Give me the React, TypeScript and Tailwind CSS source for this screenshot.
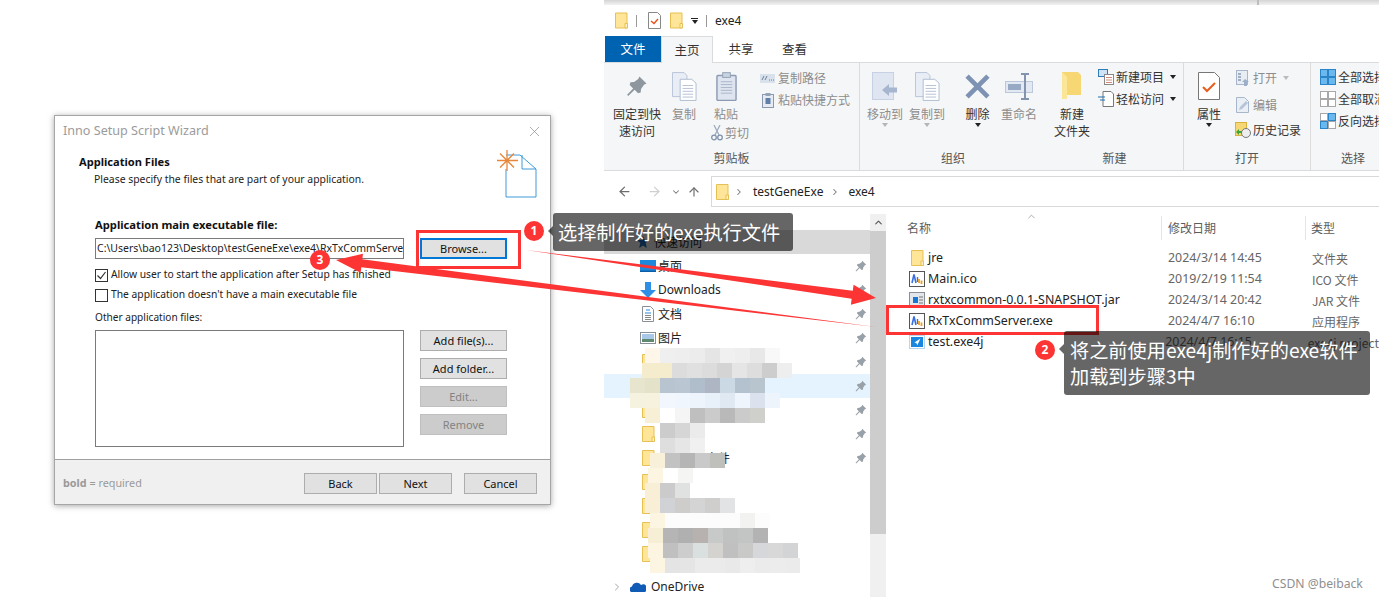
import type { ReactNode } from "react"
import { ArrowLeft, ArrowRight, ArrowUp, ChevronDown, ChevronRight, ChevronUp, X } from "lucide-react"

const UI = "font-['Noto_Sans','Noto_Sans_CJK_SC',sans-serif]"
const CJK = "font-['Noto_Sans_CJK_SC','Noto_Sans',sans-serif]"

const NAV_ROWS = [
  { label: "桌面", icon: "desktop", pin: true },
  { label: "Downloads", icon: "down", pin: true },
  { label: "文档", icon: "doc", pin: true },
  { label: "图片", icon: "pic", pin: true },
  { label: "", icon: "folder", pin: true },
  { label: "", icon: "folder", pin: true, active: true },
  { label: "2024", icon: "folder", pin: true },
  { label: "", icon: "folder", pin: true },
  { label: "　　　　文件", icon: "folder", pin: true },
  { label: "", icon: "folder" },
  { label: "", icon: "folder" },
  { label: "", icon: "folder" },
  { label: "", icon: "folder" },
]

const FILES = [
  { name: "jre", date: "2024/3/14 14:45", type: "文件夹", icon: "folder" },
  { name: "Main.ico", date: "2019/2/19 11:54", type: "ICO 文件", icon: "app" },
  { name: "rxtxcommon-0.0.1-SNAPSHOT.jar", date: "2024/3/14 20:42", type: "JAR 文件", icon: "jar" },
  { name: "RxTxCommServer.exe", date: "2024/4/7 16:10", type: "应用程序", icon: "app" },
  { name: "test.exe4j", date: "2024/4/7 16:15", type: "exe4j project", icon: "exe4j" },
]

// mosaic that hides the folder names: [top, left, colours]
const MOSAIC: [number, number, string[]][] = [
  [348, 645, ["#fdf6e9", "#efefef", "#eeeeee", "#ececec", "#e5e5e5", "#f0f0f0", "#eeeeee", "#e8e8e8", "#f8f8f8"]],
  [363, 642, ["#f5eccd", "#f5eccd", "#dcdcdc", "#e0e0e0", "#dcdcdc", "#d4d4d4", "#e5e5e5", "#dddddd", "#cdcdcd", "#eeeeef"]],
  [378, 630, ["#e8e5cf", "#e4e2c8", "#b8c4d0", "#bac6d2", "#b0bdca", "#aeb6c4", "#cbd9e5", "#b4c2d0", "#b8c4ce"]],
  [393, 630, ["#f5f3e0", "#f6f2dd", "#f2f7fd", "#f0f6fd", "#eef4fc", "#e8f0fa", "#e0e8f2", "#eef5fd", "#dce2ed", "#eef4fc"]],
  [408, 645, ["#f8f0d6", "#ffffff", "#f5f5f5", "#bfbfbf", "#cbcbcb", "#b9b9b9", "#cbcbcb", "#cfcfcc"]],
  [423, 660, ["#cccccc", "#d6d6d6", "#ebebec"]],
  [438, 660, ["#dedede", "#e6e6e7", "#f0f0f0"]],
  [453, 650, ["#f8f0d8", "#c2c2c2", "#b4b5b4", "#c9c9c9", "#bfc0bc"]],
  [468, 648, ["#fbf5e2", "#ffffff", "#f5f5f3"]],
  [483, 645, ["#f8efd6", "#cbcbcb", "#e0e2e2"]],
  [498, 645, ["#f8efd6", "#d1d2d6", "#cfcdcc", "#d4d4d4", "#cfcecc", "#e2e3e5"]],
  [513, 650, ["#fbf5e2", "#fcfcfc", "#fcfcfc", "#fcfcfc", "#fcfcfc", "#fcfcfc", "#f2f2f0", "#fcfcfc"]],
  [528, 648, ["#f7efd5", "#b5b5b5", "#b0b0b0", "#b7b2b0", "#c8c9c9", "#c0c2c2", "#c3c5c5", "#b3b3b3"]],
  [543, 648, ["#fbf5e2", "#c0c0c0", "#cdcdcd", "#dadfe0", "#d5d3d0", "#c0c0c0", "#c9c9c7", "#d5d7da", "#d8d8d8", "#d3d4d6"]],
  [558, 650, ["#fbf5e2", "#e4e4e4", "#e5e5e5", "#ebebeb", "#ebebeb", "#e9e9e9", "#eeeeee", "#ebebeb", "#ececec", "#ebebeb"]],
]

function FolderIcon({ className = "w-[13px] h-[16px]" }: { className?: string }) {
  return (
    <svg viewBox="0 0 13 16" className={className}>
      <path d="M.5.5h11.5v15H.5z" fill="#ffe597" stroke="#e6bf55" />
      <path d="M10 11h2.5v4.5H10z" fill="#fff2c4" stroke="#e6bf55" />
    </svg>
  )
}

function AppIcon() {
  return (
    <svg viewBox="0 0 16 16" className="w-[16px] h-[16px]">
      <rect x=".5" y=".5" width="15" height="15" fill="#fff" stroke="#555" />
      <path d="M3 12 5 3.500 7 12" fill="none" stroke="#3a6fe0" strokeWidth="1.600" />
      <path d="M8.500 6v5" stroke="#3a6fe0" strokeWidth="1.400" />
      <path d="M10 8v4M12.500 9.500V13" stroke="#f0a020" strokeWidth="1.800" />
    </svg>
  )
}

function JarIcon() {
  return (
    <svg viewBox="0 0 16 16" className="w-[16px] h-[16px]">
      <rect x=".5" y=".5" width="15" height="15" fill="#e3e6ea" stroke="#8a8f96" />
      <rect x="4" y="5" width="5" height="6" fill="#1976d2" />
      <path d="M10 5h4M10 8h4M10 11h4" stroke="#777" />
    </svg>
  )
}

function Exe4jIcon() {
  return (
    <svg viewBox="0 0 16 16" className="w-[16px] h-[16px]">
      <rect x=".5" y="1.500" width="15" height="13" fill="#fff" stroke="#b8d4ef" />
      <rect x="2" y="3" width="12" height="10" fill="#1a86e0" />
      <path d="m11.500 4.500-6 4 2 .8.8 2z" fill="#fff" />
    </svg>
  )
}

function PinIcon({ className = "w-[12px] h-[12px]", color = "#98a0a8" }: { className?: string; color?: string }) {
  return (
    <svg viewBox="0 0 12 12" className={className}>
      <path d="M7.300.8 11.200 4.700 9.800 5.300 8.200 7.600 8 9.600 6.600 10 4.700 8.100 1.200 11.400.6 10.800 3.900 7.300 2 5.400 2.400 4 4.400 3.800 6.700 2.200z" fill={color} />
    </svg>
  )
}

function NavIcon({ kind }: { kind: string }) {
  if (kind === "desktop")
    return (
      <svg viewBox="0 0 16 12" className="w-[16px] h-[12px]">
        <rect width="16" height="12" fill="#1e88dd" />
        <rect y="10.500" width="16" height="1.500" fill="#0a5ea8" />
      </svg>
    )
  if (kind === "down")
    return (
      <svg viewBox="0 0 16 16" className="w-[16px] h-[16px]">
        <path d="M5 0h6v8h5l-8 8-8-8h5z" fill="#2f8fe6" />
      </svg>
    )
  if (kind === "doc")
    return (
      <svg viewBox="0 0 12 16" className="w-[12px] h-[16px]">
        <path d="M.5.5h8l3 3v12H.5z" fill="#fff" stroke="#8a8f96" />
        <path d="M4 4h4M3 7h6" stroke="#2a8ad8" />
        <path d="M3 9.500h6M3 11.500h6M3 13.500h6" stroke="#888" />
      </svg>
    )
  if (kind === "pic")
    return (
      <svg viewBox="0 0 16 12" className="w-[16px] h-[12px]">
        <rect x=".5" y=".5" width="15" height="11" fill="#fff" stroke="#8a8f96" />
        <rect x="2" y="2" width="12" height="5" fill="#a9c7e6" />
        <rect x="2" y="7" width="12" height="3" fill="#5f8a70" />
      </svg>
    )
  return <FolderIcon className="w-[13px] h-[16px]" />
}

function WizButton({ children, state = "normal", className = "w-[87px]" }: { children: ReactNode; state?: string; className?: string }) {
  const tone =
    state === "focus"
      ? "border-2 border-[#0078d7] bg-[#e1e1e1] text-[#111]"
      : state === "off"
        ? "border border-[#bfbfbf] bg-[#cccccc] text-[#838383]"
        : "border border-[#adadad] bg-[#e1e1e1] text-[#111]"
  return <div className={`h-[21px] flex items-center justify-center pt-[1px] text-[11px] ${tone} ${className}`}>{children}</div>
}

function Checkbox({ checked, label }: { checked?: boolean; label: string }) {
  return (
    <div className="flex items-center h-[14px]">
      <div className="w-[13px] h-[13px] border border-[#333] bg-white flex items-center justify-center">
        {checked && (
          <svg viewBox="0 0 11 11" className="w-[11px] h-[11px]">
            <path d="m1.500 5.500 3 3 5-6.500" fill="none" stroke="#333" strokeWidth="1.200" />
          </svg>
        )}
      </div>
      <span className="ml-[3px] text-[10.3px] text-[#222] whitespace-nowrap">{label}</span>
    </div>
  )
}

function Wizard() {
  return (
    <div className={`absolute left-[54px] top-[115px] w-[497px] h-[390px] bg-white border border-[#a6a6a6] shadow-[0_1px_6px_rgba(0,0,0,0.35)] flex flex-col ${UI}`}>
      <div className="h-[29px] shrink-0 flex items-center justify-between pl-[8px] pr-[7px] pt-[1px]">
        <span className="text-[12.6px] text-[#9b9b9b]">Inno Setup Script Wizard</span>
        <X className="w-[17px] h-[17px] text-[#8c8c8c]" strokeWidth={1} />
      </div>
      <div className="relative flex-1 pl-[40px] pr-[43px]">
        <div className="-ml-[16px] mt-[9px] text-[11.1px] font-bold leading-[16px] text-[#111]">Application Files</div>
        <div className="-ml-[1px] text-[10.4px] leading-[19px] text-[#222]">Please specify the files that are part of your application.</div>
        <svg viewBox="0 0 44 48" className="absolute left-[441px] top-[5px] w-[44px] h-[48px]">
          <path d="M10 5h14l16 14v28H10V19" fill="none" stroke="#3f9ad6" strokeWidth="1" />
          <path d="M26 5v14h14" fill="none" stroke="#3f9ad6" strokeWidth="1" />
          <path d="M11 0v21M1 10.500h21M4 3.500l14 14M18 3.500 4 17.500" stroke="#e8863a" strokeWidth="1.300" />
        </svg>
        <div className="mt-[29px] text-[11.2px] font-bold leading-[14px] text-[#111]">Application main executable file:</div>
        <div className="mt-[6px] flex items-center gap-[16px]">
          <div className="w-[309px] h-[21px] border border-[#7a7a7a] flex items-center pl-[1px] overflow-hidden">
            <span className="text-[10.5px] text-[#222] whitespace-nowrap">C:\Users\bao123\Desktop\testGeneExe\exe4\RxTxCommServer.exe</span>
          </div>
          <WizButton state="focus">Browse...</WizButton>
        </div>
        <div className="mt-[9px] flex flex-col gap-[6px]">
          <Checkbox checked label="Allow user to start the application after Setup has finished" />
          <Checkbox label="The application doesn't have a main executable file" />
        </div>
        <div className="mt-[8px] text-[10.1px] leading-[14px] text-[#222]">Other application files:</div>
        <div className="mt-[6px] flex gap-[16px]">
          <div className="w-[309px] h-[117px] border border-[#7a7a7a] bg-white" />
          <div className="flex flex-col gap-[7px]">
            <WizButton>Add file(s)...</WizButton>
            <WizButton>Add folder...</WizButton>
            <WizButton state="off">Edit...</WizButton>
            <WizButton state="off">Remove</WizButton>
          </div>
        </div>
      </div>
      <div className="h-[45px] shrink-0 bg-[#f0f0f0] border-t border-[#a0a0a0] flex items-center pl-[8px] pr-[13px] pt-[3px]">
        <span className="text-[10.8px] text-[#9a9a9a]">
          <b>bold</b> = required
        </span>
        <div className="ml-auto flex">
          <WizButton className="w-[73px]">Back</WizButton>
          <WizButton className="w-[73px] ml-[2px]">Next</WizButton>
          <WizButton className="w-[73px] ml-[12px]">Cancel</WizButton>
        </div>
      </div>
    </div>
  )
}

function Big({ icon, lines, caret, dim, className = "" }: { icon: ReactNode; lines: string[]; caret?: boolean; dim?: boolean; className?: string }) {
  return (
    <div className={`flex flex-col items-center ${className}`}>
      <div className="h-[42px] pt-[4px] flex items-center justify-center">{icon}</div>
      {lines.map((l) => (
        <div key={l} className={`leading-[17px] whitespace-nowrap ${dim ? "text-[#8d8d8d]" : "text-[#333]"}`}>
          {l}
        </div>
      ))}
      {caret && <div className={`mt-[1px] w-0 h-0 border-x-[3.5px] border-x-transparent border-t-[4px] ${dim ? "border-t-[#b5b5b5]" : "border-t-[#222]"}`} />}
    </div>
  )
}

function Small({ icon, label, dim, caret }: { icon: ReactNode; label: string; dim?: boolean; caret?: boolean }) {
  return (
    <div className={`flex items-center h-[22px] whitespace-nowrap ${dim ? "text-[#8d8d8d]" : "text-[#333]"}`}>
      <div className="w-[19px] flex justify-center">{icon}</div>
      <span className="ml-[1px]">{label}</span>
      {caret && <div className={`ml-[6px] w-0 h-0 border-x-[3.5px] border-x-transparent border-t-[4px] ${dim ? "border-t-[#bbb]" : "border-t-[#222]"}`} />}
    </div>
  )
}

function Group({ label, width, sep = true, children }: { label: string; width: string; sep?: boolean; children: ReactNode }) {
  return (
    <div className={`relative shrink-0 flex flex-col ${width} ${sep ? "border-r border-[#dcdcdc]" : ""}`}>
      <div className="flex-1 flex">{children}</div>
      <div className="h-[19px] mb-[3px] flex items-center justify-center text-[#555]">{label}</div>
    </div>
  )
}

const DocsIcon = (
  <svg viewBox="0 0 26 30" className="w-[25px] h-[29px]">
    <path d="M.5.5h12l3 3v22H.5z" fill="#e8edf6" stroke="#b8c4d6" />
    <path d="M8.500 7.500h12l4.500 4v18h-16.500z" fill="#fff" stroke="#aebcd0" />
    <path d="M11 14h11M11 17h11M11 20h11M11 23h11M11 26h11" stroke="#b4c0d2" />
  </svg>
)

function Ribbon() {
  return (
    <div className={`h-[108px] bg-[#f5f6f7] border-b border-[#dadbdc] flex text-[12px] ${CJK}`}>
      <Group label="剪贴板" width="w-[256px]">
        <Big
          className="ml-[9px] w-[48px]"
          lines={["固定到快", "速访问"]}
          icon={<PinIcon className="w-[22px] h-[22px]" color="#8e979e" />}
        />
        <Big className="ml-[11px] w-[24px]" dim lines={["复制"]} icon={DocsIcon} />
        <div className="ml-[18px] w-[40px] flex flex-col items-start">
          <Big
            className="w-[24px]"
            dim
            lines={["粘贴"]}
            icon={
              <svg viewBox="0 0 22 30" className="w-[21px] h-[29px]">
                <rect x="1" y="3.500" width="20" height="26" rx="1" fill="#dfe5f0" stroke="#8c9ab3" strokeWidth="1.500" />
                <rect x="7" y=".5" width="8" height="5" fill="#c8d2e0" stroke="#94a2b6" />
                <path d="M5 10h12M5 13h12M5 16h12M5 19h12M5 22h12" stroke="#a8b4c8" />
              </svg>
            }
          />
          <div className="-ml-[3px] mt-[2px] flex items-center text-[#8d8d8d] whitespace-nowrap">
            <svg viewBox="0 0 12 16" className="w-[12px] h-[16px]">
              <path d="M3 0 8 10M9 0 4 10" stroke="#9aa8bc" strokeWidth="1.200" />
              <circle cx="3" cy="12.500" r="2.300" fill="none" stroke="#7f93ae" strokeWidth="1.300" />
              <circle cx="9" cy="12.500" r="2.300" fill="none" stroke="#7f93ae" strokeWidth="1.300" />
            </svg>
            <span className="ml-[2px]">剪切</span>
          </div>
        </div>
        <div className="ml-[4px] mt-[4px] flex flex-col">
          <Small
            dim
            label="复制路径"
            icon={
              <svg viewBox="0 0 15 9" className="w-[15px] h-[9px]">
                <rect width="15" height="9" fill="#d9e1ec" />
                <path d="M2 6 4 2M5 6l2-4M9 6h1M11 6h1M13 6h1" stroke="#6d7f98" />
              </svg>
            }
          />
          <Small
            dim
            label="粘贴快捷方式"
            icon={
              <svg viewBox="0 0 12 15" className="w-[12px] h-[15px]">
                <rect x=".5" y="1.500" width="11" height="13" fill="#e6ebf3" stroke="#8a99b0" />
                <rect x="3.500" y="5" width="5" height="6" fill="#5f7fa8" />
                <rect x="3.500" width="5" height="3" fill="#94a2b6" />
              </svg>
            }
          />
        </div>
      </Group>
      <Group label="组织" width="w-[186px]" sep={false}>
        <Big
          className="ml-[7px] w-[36px]"
          dim
          caret
          lines={["移动到"]}
          icon={
            <svg viewBox="0 0 26 28" className="w-[26px] h-[28px]">
              <rect x=".5" y=".5" width="21" height="27" fill="#dfe6f2" stroke="#c6d2e4" />
              <path d="m10 18 7-6v3.500h8v5h-8V24z" fill="#a6b6cf" />
            </svg>
          }
        />
        <Big className="ml-[6px] w-[36px]" dim caret lines={["复制到"]} icon={DocsIcon} />
        <Big
          className="ml-[20px] w-[25px]"
          caret
          lines={["删除"]}
          icon={
            <svg viewBox="0 0 24 24" className="w-[25px] h-[25px]">
              <path d="M2 2l20 20M22 2 2 22" stroke="#7e93b3" strokeWidth="4.500" />
            </svg>
          }
        />
        <Big
          className="ml-[11px] w-[36px]"
          dim
          lines={["重命名"]}
          icon={
            <svg viewBox="0 0 28 27" className="w-[28px] h-[27px]">
              <rect x=".5" y="8.500" width="27" height="11" fill="#e3e9f3" stroke="#bcc8da" />
              <rect x="3" y="11" width="13" height="6" fill="#98a9c4" />
              <path d="M16 1h8M20 1v25M16 26h8" stroke="#8494ae" strokeWidth="2" />
            </svg>
          }
        />
      </Group>
      <Group label="新建" width="w-[138px]">
        <Big
          className="ml-[8px] w-[36px]"
          lines={["新建", "文件夹"]}
          icon={
            <svg viewBox="0 0 20 28" className="w-[20px] h-[28px]">
              <path d="M0 0h16l3 3v20H5l-5 4z" fill="#f7d774" />
              <path d="M0 0l5 5v22H0z" fill="#fbe596" />
            </svg>
          }
        />
        <div className="ml-[6px] mt-[3px] flex flex-col">
          <Small
            caret
            label="新建项目"
            icon={
              <svg viewBox="0 0 16 16" className="w-[16px] h-[16px]">
                <rect x=".5" y=".5" width="9" height="7" fill="#cfe3f6" stroke="#2f7db8" />
                <rect x="6.500" y="5.500" width="9" height="10" fill="#fff" stroke="#888" />
                <path d="M8 8.500h6M8 11h6M8 13.500h6" stroke="#d08a7a" />
              </svg>
            }
          />
          <Small
            caret
            label="轻松访问"
            icon={
              <svg viewBox="0 0 16 16" className="w-[16px] h-[16px]">
                <path d="M5 .5h8l2.500 2.500v12.500H5z" fill="#fff" stroke="#777" />
                <path d="M0 6h7M2 9h5" stroke="#1f6fb0" strokeWidth="1.200" />
              </svg>
            }
          />
        </div>
      </Group>
      <Group label="打开" width="w-[127px]">
        <Big
          className="ml-[13px] w-[24px]"
          caret
          lines={["属性"]}
          icon={
            <svg viewBox="0 0 22 28" className="w-[22px] h-[28px]">
              <path d="M.5.5h16l5 5v22H.5z" fill="#fff" stroke="#777" />
              <path d="m5 15 4 4 8-8" fill="none" stroke="#e85d1c" strokeWidth="2" />
            </svg>
          }
        />
        <div className="ml-[12px] mt-[4px] flex flex-col">
          <Small
            dim
            caret
            label="打开"
            icon={
              <svg viewBox="0 0 13 16" className="w-[13px] h-[16px]">
                <rect x=".5" y=".5" width="11" height="14" fill="#e8edf4" stroke="#a8b6cb" />
                <path d="M2 4h3M2 7h3M2 10h3" stroke="#8b9ab2" strokeWidth="1.500" />
                <path d="m9 9 4 3h-2v4H8v-4H6z" fill="#9caec8" />
              </svg>
            }
          />
          <div className="h-[5px]" />
          <Small
            dim
            label="编辑"
            icon={
              <svg viewBox="0 0 13 16" className="w-[13px] h-[16px]">
                <path d="M.5.5h8l4 4v11H.5z" fill="#eaeff6" stroke="#a8b6cb" />
                <path d="m3 13 1-3 6-6 2 2-6 6z" fill="#b6c4d8" />
              </svg>
            }
          />
          <div className="h-[3px]" />
          <Small
            label="历史记录"
            icon={
              <svg viewBox="0 0 16 16" className="w-[16px] h-[16px]">
                <rect x=".5" y=".5" width="11" height="13" fill="#f7d774" stroke="#d8b23f" />
                <circle cx="11" cy="11" r="4.500" fill="#eee" stroke="#777" />
                <path d="m1 10 3-3v2h3v2H4v2z" fill="#3ca53c" />
              </svg>
            }
          />
        </div>
      </Group>
      <Group label="选择" width="w-[84px]" sep={false}>
        <div className="ml-[7px] mt-[3px] flex flex-col">
          {["全部选择", "全部取消", "反向选择"].map((label, i) => (
            <Small
              key={label}
              label={label}
              icon={
                <svg viewBox="0 0 16 16" className="w-[16px] h-[16px]">
                  {[
                    [0, 0],
                    [8, 0],
                    [0, 8],
                    [8, 8],
                  ].map(([x, y], j) => {
                    const on = i === 0 || (i === 2 && (j === 1 || j === 2))
                    return (
                      <rect
                        key={j}
                        x={x + 0.5}
                        y={y + 0.5}
                        width="7"
                        height="7"
                        fill={on ? "#6bb8ee" : "#fff"}
                        stroke={on ? "#2a85c8" : "#a8a8a8"}
                      />
                    )
                  })}
                </svg>
              }
            />
          ))}
        </div>
      </Group>
    </div>
  )
}

function Explorer() {
  return (
    <div className={`absolute left-[604px] top-0 right-0 bottom-0 bg-white flex flex-col overflow-hidden ${CJK}`}>
      <div className="h-[5px] shrink-0 bg-gradient-to-b from-[#d4d4d4] to-[#f2f2f2]">
        <div className="ml-[653px] w-[2px] h-full bg-[#bdbdbd]" />
      </div>
      {/* title row */}
      <div className="h-[31px] shrink-0 flex items-center pl-[11px] text-[12px] text-[#222]">
        <FolderIcon className="w-[13px] h-[17px]" />
        <div className="ml-[8px] w-px h-[12px] bg-[#999]" />
        <svg viewBox="0 0 13 17" className="ml-[11px] w-[13px] h-[17px]">
          <path d="M.5.5h9l3 3v13H.5z" fill="#fff" stroke="#888" />
          <path d="m3 9 3 2.500L10 7" fill="none" stroke="#e8501c" strokeWidth="1.400" />
        </svg>
        <FolderIcon className="ml-[9px] w-[13px] h-[17px]" />
        <div className="ml-[8px] flex flex-col items-center gap-[1px]">
          <div className="w-[7px] h-px bg-[#222]" />
          <div className="w-0 h-0 border-x-[3.5px] border-x-transparent border-t-[4px] border-t-[#222]" />
        </div>
        <div className="ml-[8px] w-px h-[12px] bg-[#999]" />
        <span className={`ml-[8px] ${UI}`}>exe4</span>
      </div>
      {/* tabs */}
      <div className="h-[26px] shrink-0 flex text-[12.5px] text-[#333]">
        <div className="ml-px w-[56px] bg-[#0063b1] text-white flex items-center justify-center">文件</div>
        <div className="w-[52px] h-[27px] bg-[#f5f6f7] border-x border-t border-[#dadbdc] flex items-center justify-center z-10">主页</div>
        <div className="ml-[2px] w-[52px] flex items-center justify-center">共享</div>
        <div className="ml-px w-[53px] flex items-center justify-center">查看</div>
      </div>
      <div className="border-t border-[#dadbdc]">
        <Ribbon />
      </div>
      {/* address bar */}
      <div className="h-[36px] shrink-0 flex items-center pt-[5px] text-[12px]">
        <ArrowLeft className="ml-[13px] w-[15px] h-[15px] text-[#6d6d6d]" strokeWidth={2} />
        <ArrowRight className="ml-[15px] w-[15px] h-[15px] text-[#d0d0d0]" strokeWidth={2} />
        <ChevronDown className="ml-[9px] w-[10px] h-[10px] text-[#777]" strokeWidth={2.5} />
        <ArrowUp className="ml-[6px] w-[14px] h-[14px] text-[#6d6d6d]" strokeWidth={2} />
        <div className={`ml-[10px] flex-1 h-[31px] border-y border-l border-[#d9d9d9] flex items-center pl-[4px] text-[#222] ${UI}`}>
          <FolderIcon className="w-[13px] h-[16px]" />
          <ChevronRight className="ml-[5px] w-[10px] h-[10px] text-[#777]" strokeWidth={2.5} />
          <span className="ml-[9px]">testGeneExe</span>
          <ChevronRight className="ml-[7px] w-[10px] h-[10px] text-[#777]" strokeWidth={2.5} />
          <span className="ml-[8px]">exe4</span>
        </div>
      </div>
      {/* body */}
      <div className="flex-1 flex min-h-0 text-[12px]">
        <div className="w-[266px] shrink-0 pt-[23px] text-[#222]">
          <div className="h-[24px] bg-[#d9d9d9] flex items-center pl-[33px]">
            <svg viewBox="0 0 12 12" className="w-[12px] h-[12px]">
              <path d="m6 0 1.800 4H12L8.700 7l1.100 5L6 9.400 2.200 12l1.100-5L0 4h4.200z" fill="#1f5fa8" />
            </svg>
            <span className="ml-[5px]">快速访问</span>
          </div>
          {NAV_ROWS.map((row, i) => (
            <div key={i} className={`h-[24px] flex items-center ${row.active ? "bg-[#e5f3ff]" : ""}`}>
              <div className="w-[54px] pl-[34px] flex justify-center">
                <NavIcon kind={row.icon} />
              </div>
              <span className={`whitespace-nowrap ${row.label === "Downloads" ? UI : ""}`}>{row.label}</span>
              {row.pin && (
                <div className="ml-auto mr-[3px]">
                  <PinIcon />
                </div>
              )}
            </div>
          ))}
          <div className="mt-[9px] flex items-center h-[24px]">
            <ChevronRight className="ml-[7px] w-[12px] h-[12px] text-[#a6a6a6]" strokeWidth={2} />
            <svg viewBox="0 0 16 10" className="ml-[7px] w-[16px] h-[10px]">
              <path d="M1 10a3 3 0 0 1 1-5.500A5 5 0 0 1 11 3a3.500 3.500 0 0 1 4 7z" fill="#0f5bb5" />
            </svg>
            <span className={`ml-[5px] ${UI}`}>OneDrive</span>
          </div>
        </div>
        {/* nav scrollbar */}
        <div className="w-[16px] shrink-0 bg-[#f0f0f0] flex flex-col mt-[7px]">
          <div className="h-[17px] flex items-center justify-center">
            <ChevronUp className="w-[11px] h-[11px] text-[#555]" strokeWidth={2.5} />
          </div>
          <div className="h-[303px] bg-[#cdcdcd]" />
        </div>
        {/* file list */}
        <div className={`flex-1 min-w-0 ${UI} text-[#444]`}>
          <div className="relative h-[37px] flex items-center pt-[5px] text-[#5c5c5c]">
            <ChevronUp className="absolute left-[140px] top-[4px] w-[11px] h-[11px] text-[#888]" strokeWidth={1.5} />
            <div className={`w-[276px] pl-[21px] h-[24px] flex items-center border-r border-[#e5e5e5] ${CJK}`}>名称</div>
            <div className={`w-[144px] pl-[6px] h-[24px] flex items-center border-r border-[#e5e5e5] ${CJK}`}>修改日期</div>
            <div className={`pl-[5px] ${CJK}`}>类型</div>
          </div>
          <div className="pt-[4px]">
            {FILES.map((f) => (
              <div key={f.name} className="h-[21px] flex items-center whitespace-nowrap">
                <div className="w-[275px] flex items-center pl-[23px]">
                  <div className="w-[16px] flex justify-center">
                    {f.icon === "folder" && <FolderIcon className="w-[13px] h-[16px]" />}
                    {f.icon === "app" && <AppIcon />}
                    {f.icon === "jar" && <JarIcon />}
                    {f.icon === "exe4j" && <Exe4jIcon />}
                  </div>
                  <span className="ml-[3px] text-[12.4px] text-[#222]">{f.name}</span>
                </div>
                <div className="w-[144px] pl-[7px] text-[12.4px] text-[#666]">{f.date}</div>
                <div className={`pl-[7px] text-[#666] ${CJK}`}>{f.type}</div>
              </div>
            ))}
          </div>
        </div>
      </div>
    </div>
  )
}

// tapered arrow: thin tail, thick shaft at the head
function arrowPoints(x1: number, y1: number, x2: number, y2: number, shaft: number, head: number, len: number) {
  const d = Math.hypot(x2 - x1, y2 - y1)
  const ux = (x2 - x1) / d
  const uy = (y2 - y1) / d
  const nx = -uy
  const ny = ux
  const bx = x2 - ux * len
  const by = y2 - uy * len
  const pts = [
    [x1, y1],
    [bx + (nx * shaft) / 2, by + (ny * shaft) / 2],
    [bx + (nx * head) / 2, by + (ny * head) / 2],
    [x2, y2],
    [bx - (nx * head) / 2, by - (ny * head) / 2],
    [bx - (nx * shaft) / 2, by - (ny * shaft) / 2],
  ]
  return pts.map((p) => p.join(",")).join(" ")
}

function Badge({ n, className }: { n: number; className: string }) {
  return (
    <div className={`absolute w-[20px] h-[20px] rounded-full bg-[#fc3434] text-white text-[12px] font-bold flex items-center justify-center ${UI} ${className}`}>
      {n}
    </div>
  )
}

function Tip({ className, children }: { className: string; children: ReactNode }) {
  return (
    <div className={`absolute bg-black/60 rounded-[3px] text-white text-[19.2px] leading-[26px] whitespace-nowrap ${CJK} ${className}`}>
      <div className="absolute -left-[5px] top-[13px] w-0 h-0 border-y-[5px] border-y-transparent border-r-[5px] border-r-black/60" />
      {children}
    </div>
  )
}

export default function App() {
  return (
    <div className="relative w-[1379px] h-[597px] bg-white overflow-hidden">
      <Wizard />
      <Explorer />

      {/* mosaic over the folder names */}
      {MOSAIC.map(([top, left, cells]) => (
        <div key={top} className="absolute flex h-[15px]" style={{ top, left }}>
          {cells.map((c, i) => (
            <div key={i} className="w-[15px] h-[15px]" style={{ background: c }} />
          ))}
        </div>
      ))}

      {/* annotations */}
      <div className="absolute left-[416px] top-[230px] w-[105px] h-[39px] border-[3px] border-[#fc3434]" />
      <div className="absolute left-[886px] top-[305px] w-[213px] h-[30px] border-[3px] border-[#fc3434]" />
      <svg className="absolute inset-0 w-[1379px] h-[597px]" viewBox="0 0 1379 597">
        <polygon points={arrowPoints(526, 250, 876, 298, 8, 20, 24)} fill="#fc3434" />
        <polygon points={arrowPoints(876, 327, 336, 260, 8, 19, 26)} fill="#fc3434" />
      </svg>
      <Badge n={1} className="left-[524px] top-[221px]" />
      <Badge n={2} className="left-[1035px] top-[340px]" />
      <Badge n={3} className="left-[310px] top-[250px]" />
      <Tip className="left-[553px] top-[213px] w-[240px] h-[38px] pl-[5px] pt-[6px]">选择制作好的exe执行文件</Tip>
      <Tip className="left-[1064px] top-[331px] w-[306px] h-[64px] pl-[6px] pt-[6px]">
        将之前使用exe4j制作好的exe软件
        <br />
        加载到步骤3中
      </Tip>
      <div className={`absolute left-[1272px] top-[575px] text-[12.2px] text-[#8f8f8f] ${UI}`}>CSDN @beiback</div>
    </div>
  )
}
